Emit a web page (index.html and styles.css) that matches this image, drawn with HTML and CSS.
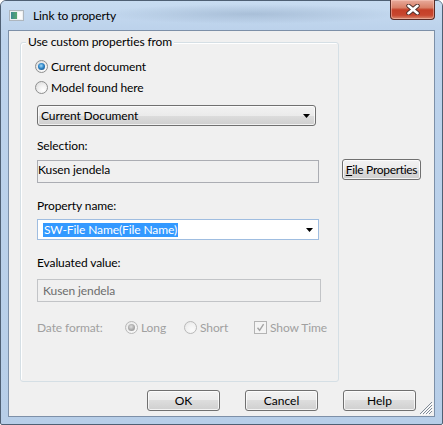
FILE: index.html
```html
<!DOCTYPE html>
<html>
<head>
<meta charset="utf-8">
<link rel="stylesheet" href="styles.css">
</head>
<body>
<div class="window">
  <div class="titlebar">
    <svg class="app-icon" width="15" height="11" viewBox="0 0 15 11">
      <defs>
        <linearGradient id="ig" x1="0" y1="0" x2="1" y2="0">
          <stop offset="0" stop-color="#3c8a92"/>
          <stop offset="1" stop-color="#5aa86e"/>
        </linearGradient>
      </defs>
      <rect x="0.5" y="0.5" width="14" height="10" fill="#edf0f2" stroke="#aeb6be"/>
      <rect x="2" y="2" width="6" height="7" fill="url(#ig)"/>
      <rect x="9" y="2" width="4" height="7" fill="#fbfbfb"/>
    </svg>
    <span class="title">Link to property</span>
    <div class="close">
      <svg width="14" height="11" viewBox="0 0 14 11">
        <path d="M2.5 1.8 L11.5 9.2 M11.5 1.8 L2.5 9.2" stroke="#4a2d29" stroke-width="4.4" stroke-linecap="round"/>
        <path d="M2.5 1.8 L11.5 9.2 M11.5 1.8 L2.5 9.2" stroke="#ffffff" stroke-width="2.6" stroke-linecap="round"/>
      </svg>
    </div>
  </div>
  <div class="client">
    <div class="top-row">
      <div class="group">
        <span class="legend">Use custom properties from</span>
        <div class="radio-row"><span class="radio checked"></span><span>Current document</span></div>
        <div class="radio-row r2"><span class="radio"></span><span>Model found here</span></div>
        <div class="dropdown"><span>Current Document</span><svg class="arrow" width="7" height="4" viewBox="0 0 7 4"><path d="M0 0H7L3.5 4Z" fill="#000"/></svg></div>
        <div class="label l-sel">Selection:</div>
        <div class="textbox sel">Kusen jendela</div>
        <div class="label l-prop">Property name:</div>
        <div class="combo"><span class="hl">SW-File Name(File Name)</span><svg class="arrow" width="7" height="4" viewBox="0 0 7 4"><path d="M0 0H7L3.5 4Z" fill="#000"/></svg></div>
        <div class="label l-eval">Evaluated value:</div>
        <div class="textbox eval">Kusen jendela</div>
        <div class="date-row">
          <span class="date-label">Date format:</span>
          <span class="opt opt-long"><span class="radio disabled checked"></span><span>Long</span></span>
          <span class="opt opt-short"><span class="radio disabled"></span><span>Short</span></span>
          <span class="opt"><span class="check">
            <svg width="11" height="11" viewBox="0 0 11 11"><path d="M2.5 5.8 L4.6 8.3 L8.6 2.2" fill="none" stroke="#a4a4a4" stroke-width="1.4"/></svg>
          </span><span>Show Time</span></span>
        </div>
      </div>
      <div class="side">
        <button class="btn fileprops"><u>F</u>ile Properties</button>
      </div>
    </div>
    <div class="buttons">
      <button class="btn">OK</button>
      <button class="btn">Cancel</button>
      <button class="btn">Help</button>
    </div>
    <svg class="grip" width="14" height="14" viewBox="0 0 14 14">
      <g stroke="#7f8a96" stroke-width="1">
        <path d="M13 1 L1 13"/>
        <path d="M13 4 L4 13"/>
        <path d="M13 7 L7 13"/>
        <path d="M13 10 L10 13"/>
      </g>
      <g stroke="#ffffff" stroke-width="1">
        <path d="M14 2 L2 14"/>
        <path d="M14 5 L5 14"/>
        <path d="M14 8 L8 14"/>
      </g>
    </svg>
  </div>
</div>
</body>
</html>
```

FILE: styles.css
```css
* { box-sizing: border-box; }
html, body { margin: 0; padding: 0; }
body {
  width: 443px;
  height: 425px;
  overflow: hidden;
  background: #ffffff;
  font-family: Lato, "Open Sans", sans-serif;
  font-size: 12px;
  letter-spacing: -0.1px;
  color: #000;
}
.window {
  width: 443px;
  height: 425px;
  border: 1px solid #4f6074;
  border-radius: 6px 6px 2px 2px;
  background: linear-gradient(to bottom, #c8dbf0 0px, #bdd3ec 40px, #b7cee8 100%);
  padding: 0 7px 7px 7px;
  display: flex;
  flex-direction: column;
}
.titlebar {
  height: 29px;
  margin: 0 -7px;
  padding-left: 8px;
  display: flex;
  align-items: center;
  border-radius: 5px 5px 0 0;
  background:
    radial-gradient(ellipse 150px 10px at 250px 13px, rgba(110, 135, 165, 0.30), rgba(110, 135, 165, 0)),
    linear-gradient(to bottom, #c8dcf1, #bcd2eb);
}
.app-icon { flex: none; }
.title {
  margin-left: 9px;
  line-height: 16px;
  color: #000;
}
.close {
  flex: none;
  margin-left: auto;
  margin-right: 7px;
  margin-top: -1px;
  align-self: flex-start;
  width: 45px;
  height: 20px;
  border: 1px solid #5a2b25;
  border-top: none;
  border-radius: 0 0 4px 4px;
  background: linear-gradient(to bottom, #e8ab9c 0%, #d98068 40%, #c43f27 52%, #c8472f 80%, #d88a70 100%);
  box-shadow: inset 0 0 0 1px rgba(255, 210, 200, 0.45);
  display: flex;
  align-items: center;
  justify-content: center;
}
.client {
  flex: 1;
  position: relative;
  background: #f0f0f0;
  border: 1px solid #7d90a8;
  padding: 11px 12px 0 11px;
}
.top-row {
  display: flex;
  align-items: flex-start;
}
.group {
  flex: none;
  position: relative;
  width: 319px;
  height: 340px;
  border: 1px solid #d5dfe5;
  border-radius: 3px;
  box-shadow: inset 1px 1px 0 #ffffff;
  padding: 15px 0 0 16px;
}
.legend {
  position: absolute;
  top: -9px;
  left: 5px;
  padding: 0 2px;
  line-height: 16px;
  background: #f0f0f0;
}
.radio-row {
  display: flex;
  align-items: center;
  gap: 3px;
  height: 16px;
  margin-left: -2px;
}
.r2 { margin-top: 5px; }
.radio {
  position: relative;
  flex: none;
  width: 13px;
  height: 13px;
  border-radius: 50%;
  border: 1px solid #8e8f8f;
  background: radial-gradient(circle at 65% 70%, #ffffff 0%, #f0f0f0 45%, #d6d6d6 100%);
}
.radio.checked::after {
  content: "";
  position: absolute;
  left: 2px;
  top: 2px;
  width: 7px;
  height: 7px;
  border-radius: 50%;
  background: radial-gradient(circle at 45% 40%, #a6dcf8 0%, #2f86c9 45%, #123f6c 100%);
}
.radio.disabled {
  border-color: #b9b9b9;
  background: radial-gradient(circle at 65% 70%, #fafafa 0%, #f2f2f2 50%, #e2e2e2 100%);
}
.radio.disabled.checked::after {
  background: radial-gradient(circle at 45% 40%, #e0e0e0 0%, #a8a8a8 55%, #8c8c8c 100%);
}
.dropdown {
  display: flex;
  align-items: center;
  width: 279px;
  height: 21px;
  margin-top: 10px;
  padding-left: 3px;
  border: 1px solid #707070;
  border-radius: 3px;
  background: linear-gradient(to bottom, #f2f2f2 0%, #ebebeb 50%, #dddddd 50%, #cfcfcf 100%);
  box-shadow: inset 0 0 0 1px rgba(255, 255, 255, 0.7);
}
.arrow {
  flex: none;
  margin-left: auto;
  margin-right: 5px;
}
.label { line-height: 16px; }
.l-sel { margin-top: 12px; }
.l-prop { margin-top: 15px; }
.l-eval { margin-top: 15px; }
.textbox {
  border: 1px solid #abadb3;
  background: #f0f0f0;
}
.sel {
  width: 282px;
  height: 23px;
  padding-top: 1px;
  line-height: 16px;
  margin-top: 6px;
}
.combo {
  display: flex;
  align-items: center;
  width: 282px;
  height: 21px;
  margin-top: 5px;
  padding-left: 5px;
  border: 1px solid #9fbde0;
  background: #ffffff;
}
.hl {
  background: #3399ff;
  color: #ffffff;
  line-height: 14px;
  padding: 0 1px;
}
.eval {
  display: flex;
  align-items: center;
  width: 284px;
  height: 23px;
  margin-top: 8px;
  padding-left: 5px;
  border-color: #c2c4c7;
  color: #6d6d6d;
}
.date-row {
  display: flex;
  align-items: center;
  height: 16px;
  margin-top: 17px;
  color: #a0a0a0;
}
.date-label { width: 88px; flex: none; }
.opt {
  display: flex;
  align-items: center;
  gap: 3px;
  flex: none;
}
.opt-long { width: 59px; }
.opt-short { width: 70px; }
.check {
  flex: none;
  width: 13px;
  height: 13px;
  border: 1px solid #b4b4b4;
  background: #f4f4f4;
  display: flex;
  align-items: center;
  justify-content: center;
}
.side {
  flex: none;
  margin-left: 3px;
  margin-top: 117px;
}
.btn {
  font: inherit;
  color: #000;
  width: 73px;
  height: 21px;
  padding: 0;
  border: 1px solid #707070;
  border-radius: 3px;
  background: linear-gradient(to bottom, #f2f2f2 0%, #ebebeb 50%, #dddddd 50%, #cfcfcf 100%);
  box-shadow: inset 0 0 0 1px rgba(255, 255, 255, 0.75);
  white-space: nowrap;
  line-height: 16px;
}
.fileprops { width: 79px; letter-spacing: -0.3px; }
.buttons {
  display: flex;
  justify-content: flex-end;
  gap: 25px;
  margin-top: 8px;
  padding-right: 6px;
}
.grip {
  position: absolute;
  right: 1px;
  bottom: 1px;
}
```
